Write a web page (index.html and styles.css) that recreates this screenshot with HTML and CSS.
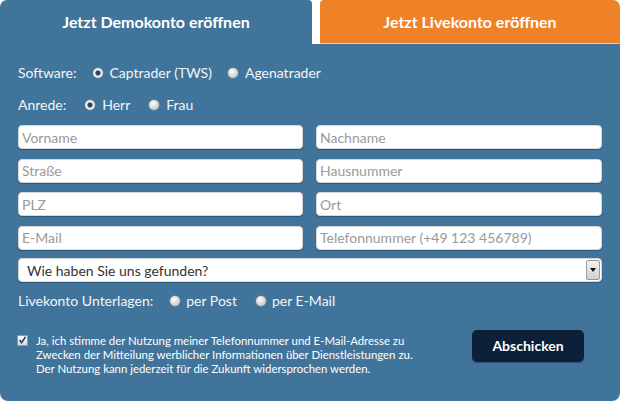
FILE: index.html
```html
<!DOCTYPE html>
<html lang="de">
<head>
<meta charset="utf-8">
<title>Konto eröffnen</title>
<link rel="stylesheet" href="styles.css">
</head>
<body>
<div class="widget">
  <div class="tabs">
    <div class="tab tab-demo">Jetzt Demokonto eröffnen</div>
    <div class="tab tab-live">Jetzt Livekonto eröffnen</div>
  </div>
  <div class="panel">
    <div class="row row-software">
      <span class="label">Software:</span>
      <span class="opt"><span class="radio on"></span>Captrader (TWS)</span>
      <span class="opt"><span class="radio"></span>Agenatrader</span>
    </div>
    <div class="row row-anrede">
      <span class="label">Anrede:</span>
      <span class="opt"><span class="radio on"></span>Herr</span>
      <span class="opt"><span class="radio"></span>Frau</span>
    </div>
    <div class="fields">
      <input class="field" type="text" placeholder="Vorname">
      <input class="field" type="text" placeholder="Nachname">
      <input class="field" type="text" placeholder="Straße">
      <input class="field" type="text" placeholder="Hausnummer">
      <input class="field" type="text" placeholder="PLZ">
      <input class="field" type="text" placeholder="Ort">
      <input class="field" type="text" placeholder="E-Mail">
      <input class="field" type="text" placeholder="Telefonnummer (+49 123 456789)">
    </div>
    <div class="select">
      <span class="select-text">Wie haben Sie uns gefunden?</span>
      <span class="select-btn"><span class="tri"></span></span>
    </div>
    <div class="row row-live">
      <span class="label">Livekonto Unterlagen:</span>
      <span class="opt"><span class="radio"></span>per Post</span>
      <span class="opt"><span class="radio"></span>per E-Mail</span>
    </div>
    <div class="bottom">
      <div class="consent">
        <span class="check">
          <svg width="10" height="10" viewBox="0 0 10 10"><path d="M1.8 5 L4 7.9 L8.4 1.4" fill="none" stroke="#1d3f7a" stroke-width="1.7"/></svg>
        </span>
        <p class="consent-text">Ja, ich stimme der Nutzung meiner Telefonnummer und E-Mail-Adresse zu<br>Zwecken der Mitteilung werblicher Informationen über Dienstleistungen zu.<br>Der Nutzung kann jederzeit für die Zukunft widersprochen werden.</p>
      </div>
      <button class="submit" type="button">Abschicken</button>
    </div>
  </div>
</div>
</body>
</html>
```

FILE: styles.css
```css
* { box-sizing: border-box; }
html, body { margin: 0; padding: 0; background: #ffffff; }
body { font-family: Lato, "Open Sans", sans-serif; color: #ffffff; }

.widget { width: 620px; height: 401px; display: flex; flex-direction: column; }

.tabs { display: flex; height: 44px; gap: 8px; background: #ffffff; }
.tab {
  font-weight: 700;
  font-size: 16px;
  text-align: center;
  line-height: 43px;
  color: #ffffff;
}
.tab-demo { width: 312px; background: #41749b; border-radius: 7px 4px 0 0; height: 44px; }
.tab-live { flex: 1; background: #ef8126; border-radius: 4px 7px 0 0; height: 44px; border-bottom: 1px solid #c9d3dc; }

.panel {
  flex: 1;
  background: #41749b;
  border-radius: 0 0 8px 8px;
  padding: 19px 18px 0 18px;
  display: flex;
  flex-direction: column;
}

.row { display: flex; align-items: center; height: 20px; font-size: 14px; line-height: 20px; color: #f2f5f8; }
.row-anrede { margin-top: 11.5px; }
.row .label { margin-right: 19px; }
.row-software .label { margin-right: 16px; }
.opt { display: flex; align-items: center; margin-right: 19px; }
.row-software .opt + .opt { margin-left: -3px; }
.row-live .label { margin-right: 17px; }
.row-live .opt .radio { margin-right: 6px; }

.radio {
  width: 10px; height: 10px; border-radius: 50%;
  margin-right: 7px;
  background: radial-gradient(circle at 40% 35%, #ffffff 0, #e4e4e4 35%, #b9b9b9 100%);
  box-shadow: 0 0 0 0.5px #8a9aa8;
}
.radio.on {
  background: radial-gradient(circle at 50% 50%, #1a3b63 0, #24507e 2.2px, #f2f2f2 3px, #d6d6d6 100%);
  box-shadow: 0 0 0 0.5px #6f7f8d;
}

.fields {
  margin-top: 10.5px;
  display: grid;
  grid-template-columns: 285px 286px;
  column-gap: 13px;
  row-gap: 9.5px;
}
.field {
  height: 24px;
  width: 100%;
  margin: 0;
  border: 1px solid #d4d8dc;
  border-radius: 4px;
  background: #ffffff;
  box-shadow: 0 1px 1px rgba(0,0,0,0.25);
  padding: 0 3px;
  font-family: Lato, "Open Sans", sans-serif;
  font-size: 14px;
  color: #333333;
  outline: none;
}
.field::placeholder { color: #9a9a9a; opacity: 1; }

.select {
  margin-top: 8.5px;
  height: 24px;
  background: #ffffff;
  border: 1px solid #d4d8dc;
  border-radius: 4px;
  box-shadow: 0 1px 1px rgba(0,0,0,0.25);
  display: flex;
  align-items: center;
  justify-content: space-between;
  padding: 0 1px 0 8px;
}
.select-text { font-size: 14px; color: #333333; }
.select-btn {
  width: 14px; height: 20px;
  border: 1px solid #9a9a9a;
  border-radius: 2px;
  background: linear-gradient(#f4f4f4, #d0d0d0);
  display: flex; align-items: center; justify-content: center;
}
.tri { width: 0; height: 0; border-left: 3.5px solid transparent; border-right: 3.5px solid transparent; border-top: 4px solid #111; }

.row-live { margin-top: 8.5px; }

.bottom {
  margin-top: 19px;
  display: flex;
  justify-content: space-between;
  align-items: flex-start;
}
.consent { display: flex; align-items: flex-start; margin-top: 4px; margin-left: -1px; }
.check {
  width: 11px; height: 11px; margin-top: 1px;
  background: linear-gradient(#ffffff, #d8dadc);
  border: 1px solid #8f9aa4;
  display: flex; align-items: center; justify-content: center;
}
.check svg { display: block; }
.consent-text {
  margin: 0 0 0 8px;
  font-size: 11.4px;
  line-height: 14.3px;
  color: #ffffff;
  white-space: nowrap;
}
.submit {
  margin-right: 18px;
  width: 112px; height: 32px;
  border: none;
  border-radius: 5px;
  background: #0c203a;
  color: #ffffff;
  font-family: Lato, "Open Sans", sans-serif;
  font-weight: 700;
  font-size: 14px;
  padding: 0;
  box-shadow: 0 1px 1px rgba(0,0,0,0.3);
}
```
